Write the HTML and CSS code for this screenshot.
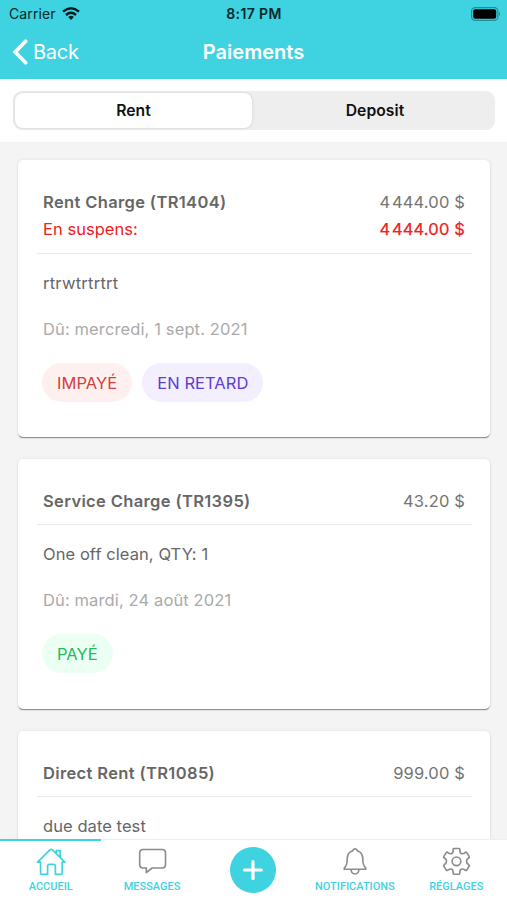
FILE: index.html
```html
<!DOCTYPE html>
<html lang="fr">
<head>
<meta charset="utf-8">
<title>Paiements</title>
<link rel="stylesheet" href="styles.css">
</head>
<body>
<div class="app">
  <header class="header">
    <div class="status">
      <div class="carrier"><span class="carrier-name">Carrier</span>
        <svg class="wifi" viewBox="0 0 18 13" fill="none" stroke="#061b1e" stroke-width="2.4"><path d="M1 4.7Q9-2.1 17 4.7M4 8Q9 3.7 14 8"/><path d="M6.2 10Q9 7.7 11.8 10L9 13Z" fill="#061b1e" stroke="none"/></svg>
      </div>
      <span class="time">8:17 PM</span>
      <svg class="battery" viewBox="0 0 30 14"><rect x=".6" y=".6" width="26.3" height="12.8" rx="3.6" fill="none" stroke="#258b96" stroke-width="1.2"/><rect x="2.2" y="2.2" width="23" height="9.6" rx="2" fill="#000"/><path d="M28 4.8Q30.2 7 28 9.2Z" fill="#258b96"/></svg>
    </div>
    <nav class="nav">
      <a class="back"><svg class="chevron" viewBox="0 0 16 26" fill="none" stroke="#fff" stroke-width="3.8" stroke-linecap="round" stroke-linejoin="miter"><path d="M13.6 2.3 3.2 13 13.6 23.7"/></svg><span class="back-label">Back</span></a>
      <h1 class="title">Paiements</h1>
      <span></span>
    </nav>
  </header>
  <div class="segment-bar">
    <div class="segment">
      <button class="seg seg-active"><span>Rent</span></button>
      <button class="seg seg-deposit"><span>Deposit</span></button>
    </div>
  </div>
  <main class="list">
    <article class="card card-due">
      <div class="card-head">
        <div class="row"><h2 class="name">Rent Charge (TR1404)</h2><span class="amount">4&#8202;444.00 $</span></div>
        <div class="row outstanding"><span>En suspens:</span><span class="amount amount-due">4&#8202;444.00 $</span></div>
      </div>
      <p class="desc desc-wide">rtrwtrtrtrt</p>
      <p class="date">Dû: mercredi, 1 sept. 2021</p>
      <div class="badges"><span class="badge unpaid">IMPAYÉ</span><span class="badge late">EN RETARD</span></div>
    </article>
    <article class="card card-paid">
      <div class="card-head">
        <div class="row"><h2 class="name">Service Charge (TR1395)</h2><span class="amount">43.20 $</span></div>
      </div>
      <p class="desc">One off clean, QTY: 1</p>
      <p class="date">Dû: mardi, 24 août 2021</p>
      <div class="badges"><span class="badge paid">PAYÉ</span></div>
    </article>
    <article class="card card-last">
      <div class="card-head">
        <div class="row"><h2 class="name">Direct Rent (TR1085)</h2><span class="amount">999.00 $</span></div>
      </div>
      <p class="desc">due date test</p>
    </article>
  </main>
  <footer class="tabs">
    <a class="tab tab-active">
      <svg class="icon" viewBox="0 0 30 30" fill="none" stroke="#3fd2e0" stroke-width="1.7" stroke-linejoin="round" stroke-linecap="round"><path d="M1.6 15.2 13.9 2.9Q15.2 1.7 16.5 2.9L28.8 15.2H26.2V26.2Q26.2 27.4 25 27.4H19.4V19.2Q19.4 17.4 17.6 17.4H13.4Q11.6 17.4 11.6 19.2V27.4H5.8Q4.6 27.4 4.6 26.2V15.2ZM20.4 6.7V3.6H24.2V10.5"/></svg>
      <span class="label">ACCUEIL</span>
    </a>
    <a class="tab">
      <svg class="icon" viewBox="0 0 30 30" fill="none" stroke="#8b8b8b" stroke-width="1.6" stroke-linejoin="round"><path d="M5.9 2.5H25.3Q28.5 2.5 28.5 5.7V17.8Q28.5 21 25.3 21H15.2L9.3 25.6V21H5.9Q2.7 21 2.7 17.8V5.7Q2.7 2.5 5.9 2.5Z"/></svg>
      <span class="label">MESSAGES</span>
    </a>
    <a class="tab tab-add"><span class="add"><svg class="plus" viewBox="0 0 20 20" fill="none" stroke="#fff" stroke-width="3.2" stroke-linecap="round"><path d="M10 1.6V18.4M1.6 10H18.4"/></svg></span></a>
    <a class="tab">
      <svg class="icon" viewBox="0 0 30 30" fill="none" stroke="#8b8b8b" stroke-width="1.6" stroke-linejoin="round"><path d="M15 1.9Q13 1.9 12.8 3.7C8.4 4.8 7.2 8 7.2 12.3C7.2 17.2 6.6 18.5 5.1 19.9Q3.9 21.2 4.2 22.3H25.8Q26.1 21.2 24.9 19.9C23.4 18.5 22.8 17.2 22.8 12.3C22.8 8 21.6 4.8 17.2 3.7Q17 1.9 15 1.9ZM11 22.3Q11.4 27 15 27T19 22.3"/></svg>
      <span class="label">NOTIFICATIONS</span>
    </a>
    <a class="tab">
      <svg class="icon gear" viewBox="0 0 30 30" fill="none" stroke="#8b8b8b" stroke-width="1.7" stroke-linejoin="round"><path d="M12.2 1.5H17.8Q18.4 1.5 18.4 2.5 18.4 6.6 20.3 6.9 21.8 7.3 24.2 5.5 25 5.1 25.6 5.8L28.2 9.9Q28.6 10.6 27.8 11.2 25.3 12.6 25.3 14.8T27.8 18.4Q28.6 19 28.2 19.7L25.6 23.9Q25 24.5 24.2 24.1 21.8 22.5 20.3 22.8 18.4 23.2 18.4 27.2 18.4 28.2 17.8 28.2H12.2Q11.6 28.2 11.6 27.2 11.6 23.2 9.7 22.8 8.2 22.5 5.8 24.1 5 24.5 4.4 23.9L1.8 19.7Q1.4 19 2.2 18.4 4.7 17 4.7 14.8T2.2 11.2Q1.4 10.6 1.8 9.9L4.4 5.8Q5 5.1 5.8 5.5 8.2 7.3 9.7 6.9 11.6 6.6 11.6 2.5 11.6 1.5 12.2 1.5Z"/><circle cx="15" cy="14.8" r="4.5"/></svg>
      <span class="label">RÉGLAGES</span>
    </a>
  </footer>
</div>
</body>
</html>
```
FILE: styles.css
```css
* { box-sizing: border-box; }
body, h1, h2, p { margin: 0; }
body { font-family: Inter, "Liberation Sans", sans-serif; background: #f4f4f4; }
.app { height: 900px; display: flex; flex-direction: column; overflow: hidden; }
.header { height: 79px; flex: none; background: #3fd2e0; color: #fff; }
.status { height: 27px; padding: 0 6px 0 9px; display: grid; grid-template-columns: 1fr auto 1fr; align-items: center; color: #06272b; }
.carrier { display: flex; align-items: center; gap: 6px; }
.carrier-name { font-size: 14px; letter-spacing: .1px; }
.wifi { width: 18px; height: 13px; margin-bottom: 1px; }
.time { font-size: 14px; font-weight: 600; letter-spacing: .4px; margin-right: 2px; }
.battery { width: 30px; height: 14px; justify-self: end; }
.nav { height: 50px; display: grid; grid-template-columns: 1fr auto 1fr; align-items: center; padding: 0 12px; }
.back { display: flex; align-items: center; gap: 5px; }
.chevron { width: 16px; height: 26px; }
.back-label { font-size: 20px; letter-spacing: -.25px; }
.title { font-size: 20px; font-weight: 600; letter-spacing: .05px; }
.segment-bar { height: 63px; flex: none; background: #fff; padding: 12px 13px 0; }
.segment { height: 39px; padding: 2px; display: grid; grid-template-columns: 237px 1fr; border-radius: 9px; background: #eee; width: 482px; }
.seg { border: 0; background: none; font: 600 15.7px Inter, sans-serif; letter-spacing: .05px; color: #111; border-radius: 8px; padding: 0 0 1px; }
.seg-active { background: #fff; box-shadow: 0 0 3px #ccc; }
.seg-deposit { padding-left: 5px; }
.list { flex: 1; min-height: 0; overflow: hidden; padding: 18px 17px 0 18px; display: flex; flex-direction: column; gap: 22px; }
.card { flex: none; background: #fff; border-radius: 5px; padding: 28px 18px 0 19px; box-shadow: 0 2px 1px -1px #8c8c8c, 0 1px 1px #bbb, 0 0 3px #ddd; color: #666; font-size: 16.5px; letter-spacing: .12px; }
.card-due { height: 277px; }
.card-paid { height: 250px; }
.card-last { height: 250px; }
.card-head { border-bottom: 1px solid #e9e9e9; padding: 0 7px 10px 6px; }
.row { height: 27px; display: flex; justify-content: space-between; align-items: center; white-space: nowrap; }
.outstanding { color: #f22020; height: 28px; letter-spacing: .03px; }
.amount { letter-spacing: .15px; color: #747474; }
.amount-due { color: #f22020; -webkit-text-stroke: .25px currentColor; }
.name { font-size: 16.5px; font-weight: 600; letter-spacing: .36px; }
.desc, .date { padding-left: 6px; line-height: 24px; white-space: nowrap; }
.desc { padding-top: 17px; letter-spacing: .07px; }
.desc-wide { letter-spacing: .25px; }
.date { color: #aaa; padding-top: 22px; }
.badges { display: flex; gap: 10px; padding: 22px 0 0 5px; letter-spacing: .05px; }
.badge { height: 39px; padding: 0 15px; line-height: 40px; border-radius: 20px; white-space: nowrap; }
.unpaid { background: #fff0f0; color: #cf3f3f; }
.late { background: #f3efff; color: #5b40d2; }
.paid { background: #ebfff2; color: #24b95e; }
.tabs { height: 61px; flex: none; background: #fff; border-top: 1px solid #eee; display: grid; grid-template-columns: repeat(5, 1fr); position: relative; }
.tab { display: flex; flex-direction: column; align-items: center; padding-top: 7px; }
.tab-active { box-shadow: 0 -1px #3fd2e0, inset 0 1px #3fd2e0; }
.icon { width: 30px; height: 30px; }
.gear { width: 29px; height: 29px; margin-bottom: 1px; }
.label { font-family: Roboto, sans-serif; font-weight: 500; font-size: 11px; line-height: 14px; color: #3fd2e0; margin-top: 3px; }
.tab-add { padding-top: 7px; }
.add { width: 46px; height: 46px; border-radius: 50%; background: #3fd2e0; display: flex; align-items: center; justify-content: center; }
.plus { width: 20px; height: 20px; }
```
